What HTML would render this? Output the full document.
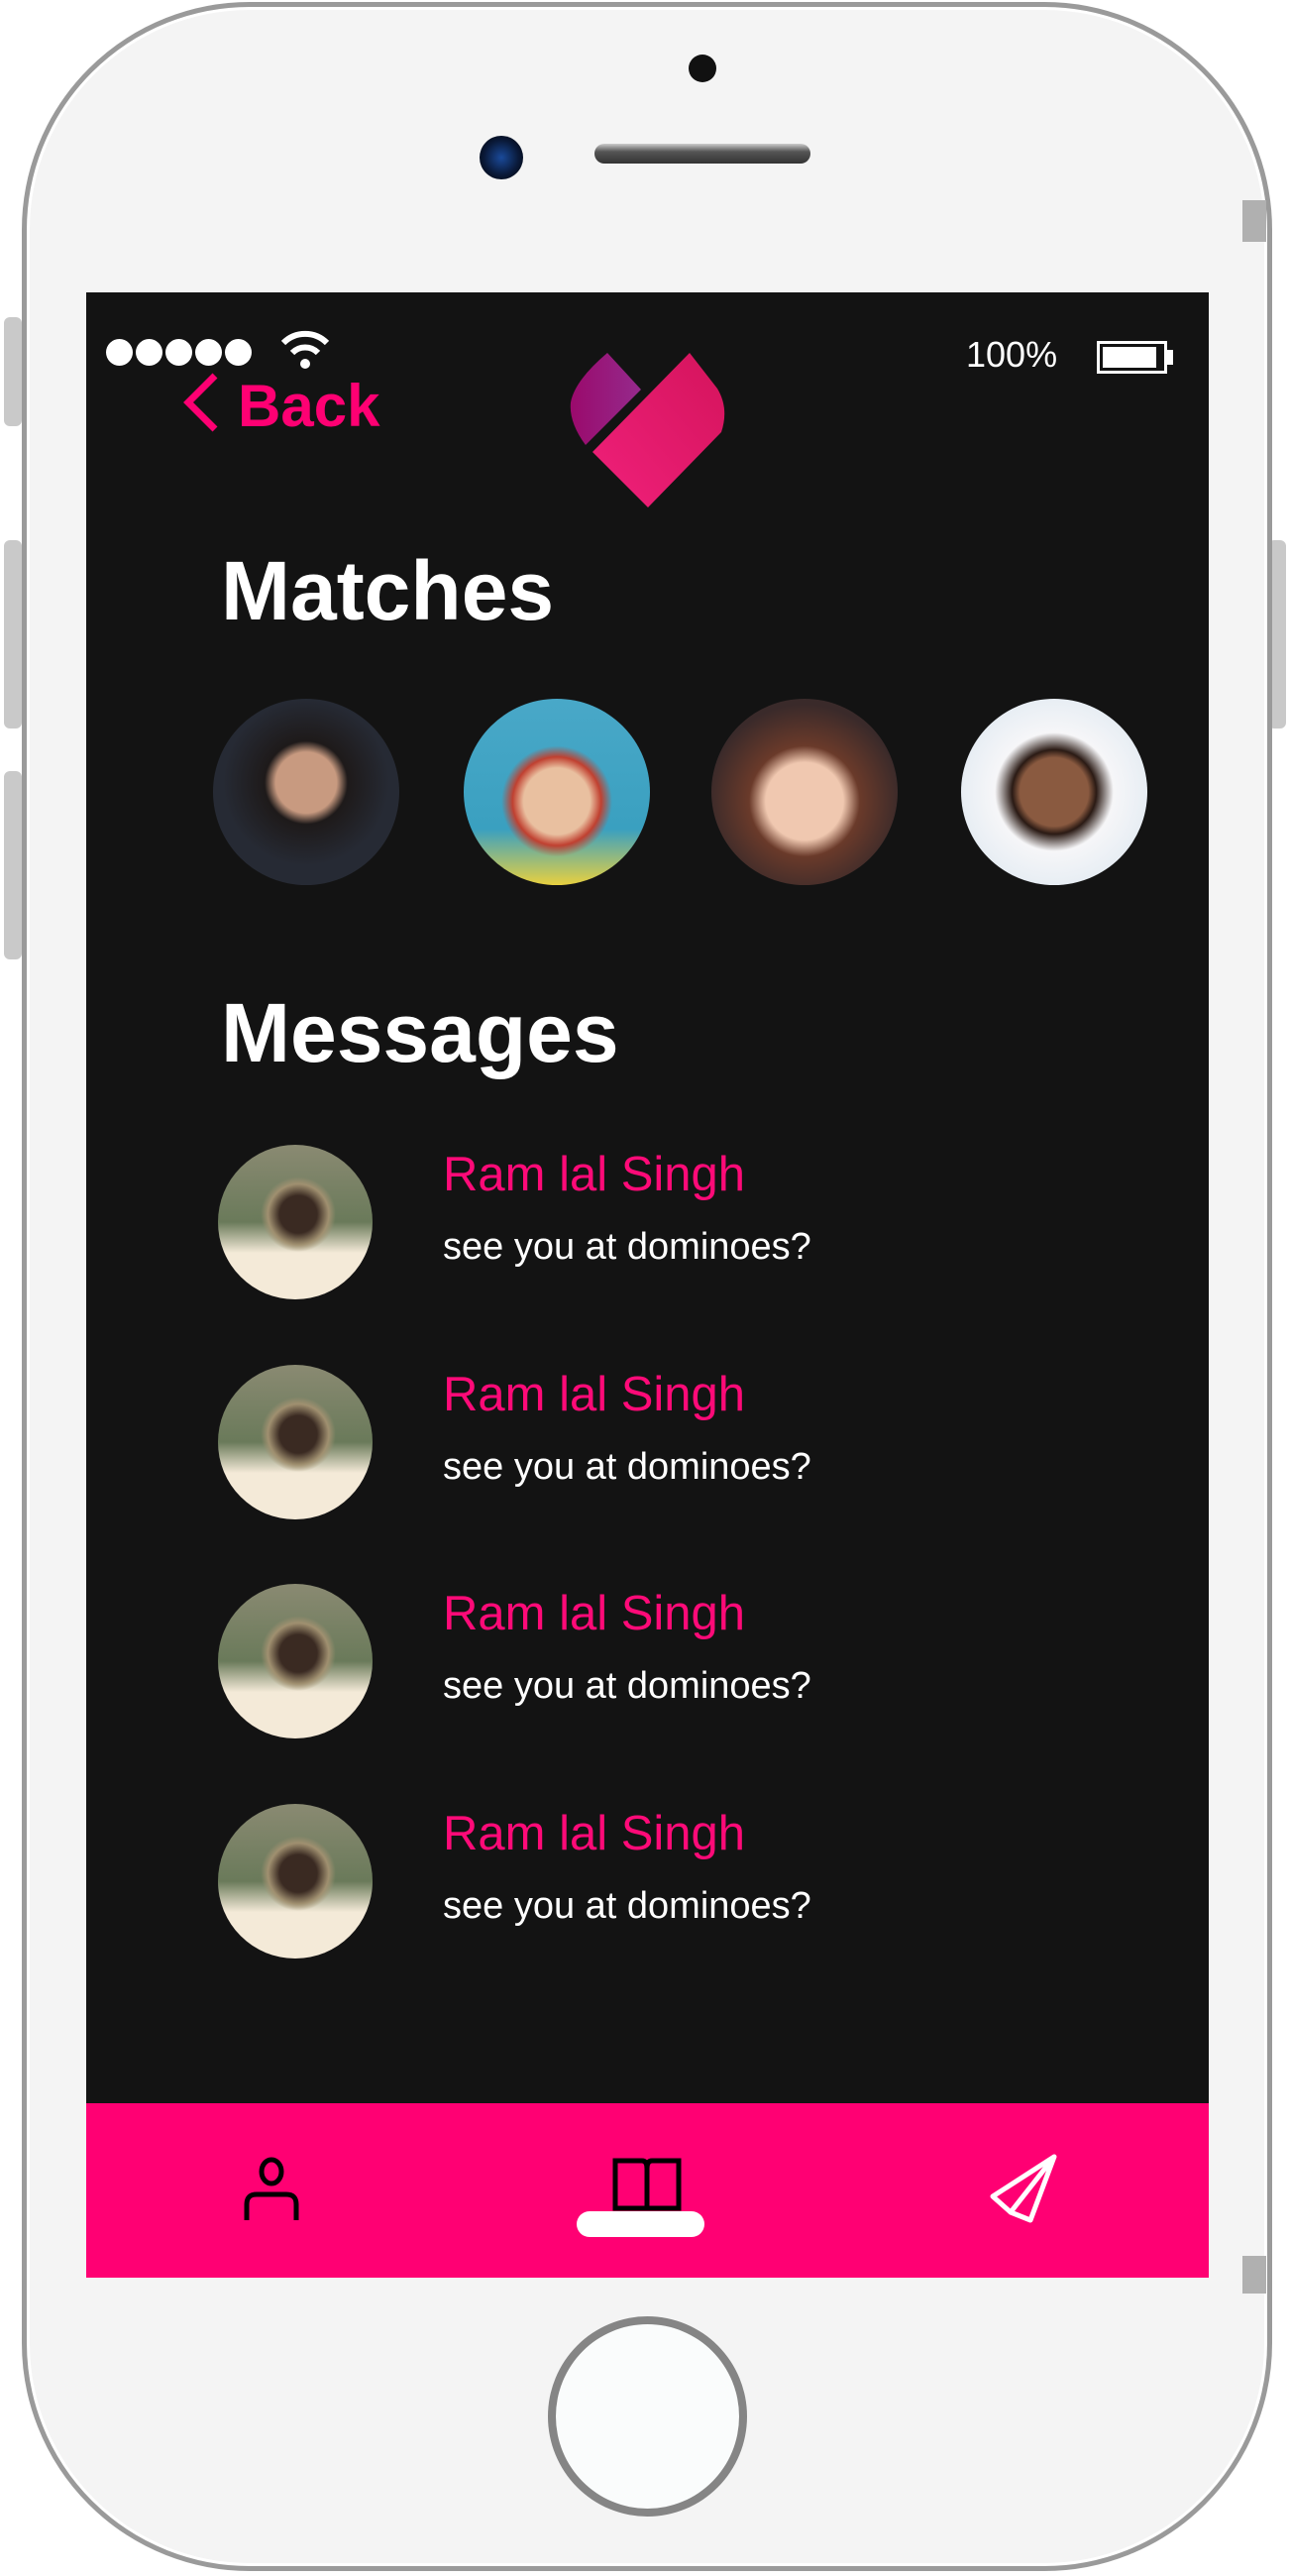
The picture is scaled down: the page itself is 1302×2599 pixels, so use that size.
<!DOCTYPE html>
<html><head><meta charset="utf-8"><style>
*{margin:0;padding:0;box-sizing:border-box}
body{width:1302px;height:2599px;background:#fff;position:relative;overflow:hidden;font-family:"Liberation Sans",sans-serif}
.a{position:absolute}
.phone{left:22px;top:2px;width:1262px;height:2592px;border-radius:230px;background:#f4f4f4;border:5px solid #9a9a9a;box-shadow:inset 0 0 0 3px #fff}
.screen{left:87px;top:295px;width:1133px;height:2003px;background:#131313}
.nav{left:87px;top:2122px;width:1133px;height:176px;background:#ff0073}
.t{color:#fff;white-space:nowrap;line-height:1}
.av{border-radius:50%}
.name{color:#ff0a78;font-size:49px}
.sub{font-size:38px;color:#fff}
</style></head><body>
<div class="a" style="left:4px;top:320px;width:18px;height:110px;background:#c9c9c9;border-radius:6px"></div>
<div class="a" style="left:4px;top:545px;width:18px;height:190px;background:#c9c9c9;border-radius:6px"></div>
<div class="a" style="left:4px;top:778px;width:18px;height:190px;background:#c9c9c9;border-radius:6px"></div>
<div class="a" style="left:1280px;top:545px;width:18px;height:190px;background:#c9c9c9;border-radius:6px"></div>
<div class="a phone"></div>
<div class="a" style="left:1254px;top:202px;width:24px;height:42px;background:#b0b0b0"></div>
<div class="a" style="left:1254px;top:2276px;width:24px;height:38px;background:#b0b0b0"></div>
<div class="a av" style="left:695px;top:55px;width:28px;height:28px;background:#111"></div>
<div class="a av" style="left:484px;top:137px;width:44px;height:44px;background:radial-gradient(#1a4a9a,#0a1a3a 55%,#000)"></div>
<div class="a" style="left:600px;top:145px;width:218px;height:20px;border-radius:10px;background:linear-gradient(#ccc,#555 40%,#333);"></div>
<div class="a screen"></div>
<div class="a" style="left:107px;top:342px;display:flex;gap:3px">
<div class="av" style="width:27px;height:27px;background:#fff"></div><div class="av" style="width:27px;height:27px;background:#fff"></div><div class="av" style="width:27px;height:27px;background:#fff"></div><div class="av" style="width:27px;height:27px;background:#fff"></div><div class="av" style="width:27px;height:27px;background:#fff"></div></div>
<svg class="a" style="left:280px;top:330px" width="56" height="44" viewBox="0 0 56 44"><path d="M6 16 A31 31 0 0 1 50 16" fill="none" stroke="#fff" stroke-width="6"/><path d="M15 26 A18 18 0 0 1 41 26" fill="none" stroke="#fff" stroke-width="6"/><circle cx="28" cy="37" r="5" fill="#fff"/></svg>
<div class="a t" style="left:975px;top:340px;font-size:36px">100%</div>
<div class="a" style="left:1107px;top:344px;width:71px;height:33px;border:3px solid #fff"><div style="margin:3px;width:54px;height:21px;background:#fff"></div></div>
<div class="a" style="left:1178px;top:353px;width:6px;height:15px;background:#fff"></div>
<svg class="a" style="left:180px;top:375px" width="44" height="62"><path d="M37 4 L10 31 L37 58" fill="none" stroke="#ff0073" stroke-width="7"/></svg>
<div class="a" style="left:240px;top:380px;font-size:60px;color:#ff0073;font-weight:bold;line-height:1">Back</div>
<svg class="a" style="left:574px;top:354px" width="160" height="160" viewBox="0 0 160 160"><defs><linearGradient id="g1" x1="0" x2="1"><stop offset="0" stop-color="#9a0a6c"/><stop offset="1" stop-color="#952a8c"/></linearGradient><linearGradient id="g2" x1="0" y1="1" x2="1" y2="0"><stop offset="0" stop-color="#f0207a"/><stop offset="1" stop-color="#d4145c"/></linearGradient></defs><path d="M39 2 L73 39 L17 95 Q0 72 2 52 Q6 30 39 2 Z" fill="url(#g1)"/><path d="M122 2 L150 38 Q162 58 154 82 L80 158 L24 102 Z" fill="url(#g2)"/></svg>
<div class="a t" style="left:223px;top:554px;font-size:84px;font-weight:bold">Matches</div>
<div class="a av" style="left:215px;top:705px;width:188px;height:188px;background:radial-gradient(circle at 50% 45%,#c89a80 0 22%,#1e1a1a 30%,#262a34 60%)"></div>
<div class="a av" style="left:468px;top:705px;width:188px;height:188px;background:radial-gradient(circle at 50% 55%,#e9c0a0 0 24%,#c04030 32%,transparent 40%),linear-gradient(#49a8c8,#3aa0c0 70%,#e8d040)"></div>
<div class="a av" style="left:718px;top:705px;width:188px;height:188px;background:radial-gradient(circle at 50% 55%,#f0c8b0 0 28%,#6a3a2a 40%,#3a2a2a 70%)"></div>
<div class="a av" style="left:970px;top:705px;width:188px;height:188px;background:radial-gradient(circle at 50% 50%,#8a5a40 0 26%,#2a1a14 32%,#f6f6f8 45%,#e8eef4 70%)"></div>
<div class="a t" style="left:223px;top:1000px;font-size:84px;font-weight:bold">Messages</div>
<div class="a av" style="left:220px;top:1155px;width:156px;height:156px;background:radial-gradient(circle at 52% 45%,#3a2a22 0 16%,#a09070 26%,transparent 32%),linear-gradient(#8a8a72,#6a7a5a 50%,#f4ead8 70%)"></div>
<div class="a t name" style="left:447px;top:1161px">Ram lal Singh</div>
<div class="a t sub" style="left:447px;top:1239px">see you at dominoes?</div>
<div class="a av" style="left:220px;top:1377px;width:156px;height:156px;background:radial-gradient(circle at 52% 45%,#3a2a22 0 16%,#a09070 26%,transparent 32%),linear-gradient(#8a8a72,#6a7a5a 50%,#f4ead8 70%)"></div>
<div class="a t name" style="left:447px;top:1383px">Ram lal Singh</div>
<div class="a t sub" style="left:447px;top:1461px">see you at dominoes?</div>
<div class="a av" style="left:220px;top:1598px;width:156px;height:156px;background:radial-gradient(circle at 52% 45%,#3a2a22 0 16%,#a09070 26%,transparent 32%),linear-gradient(#8a8a72,#6a7a5a 50%,#f4ead8 70%)"></div>
<div class="a t name" style="left:447px;top:1604px">Ram lal Singh</div>
<div class="a t sub" style="left:447px;top:1682px">see you at dominoes?</div>
<div class="a av" style="left:220px;top:1820px;width:156px;height:156px;background:radial-gradient(circle at 52% 45%,#3a2a22 0 16%,#a09070 26%,transparent 32%),linear-gradient(#8a8a72,#6a7a5a 50%,#f4ead8 70%)"></div>
<div class="a t name" style="left:447px;top:1826px">Ram lal Singh</div>
<div class="a t sub" style="left:447px;top:1904px">see you at dominoes?</div>
<div class="a nav"></div>
<svg class="a" style="left:244px;top:2176px" width="60" height="66" viewBox="0 0 60 66"><ellipse cx="30" cy="15" rx="10" ry="12" fill="none" stroke="#000" stroke-width="5"/><path d="M5 64 V48 Q5 38 15 38 H45 Q55 38 55 48 V64" fill="none" stroke="#000" stroke-width="5"/></svg>
<svg class="a" style="left:618px;top:2176px" width="70" height="56" viewBox="0 0 70 56"><path d="M3 4 H30 Q35 4 35 12 Q35 4 40 4 H67 V52 H3Z M35 12 V52" fill="none" stroke="#000" stroke-width="5"/></svg>
<div class="a" style="left:582px;top:2231px;width:129px;height:26px;border-radius:13px;background:#fff"></div>
<svg class="a" style="left:996px;top:2172px" width="74" height="72" viewBox="0 0 74 72"><path d="M68 4 L6 44 L24 60 Z M68 4 L24 60 L44 68 Z" fill="none" stroke="#fff" stroke-width="5" stroke-linejoin="round"/></svg>
<div class="a av" style="left:553px;top:2337px;width:201px;height:202px;background:#fafcfc;border:8px solid #858585"></div>
</body></html>
